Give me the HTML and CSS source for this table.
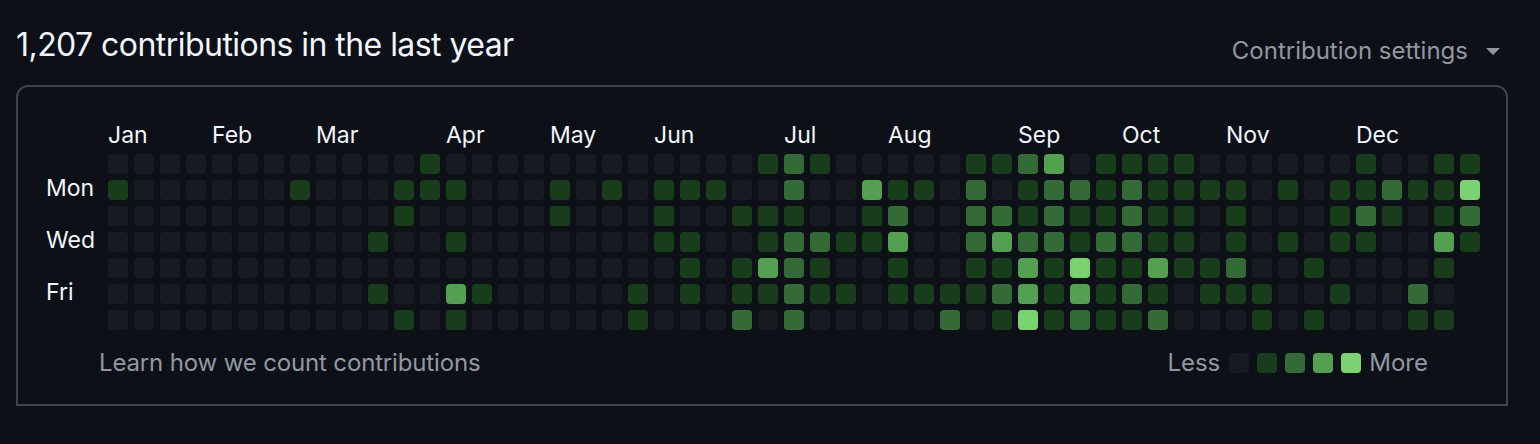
FILE: index.html
```html
<!DOCTYPE html>
<html lang="en">
<head>
<meta charset="utf-8">
<title>Contributions</title>
<link rel="stylesheet" href="styles.css">
</head>
<body>
<div class="page">
  <div class="head">
    <h2 class="title">1,207 contributions in the last year</h2>
    <button class="settings" type="button">Contribution settings
      <svg class="caret" width="14" height="7" viewBox="0 0 14 7" aria-hidden="true"><polygon points="0,0 14,0 7,7"/></svg>
    </button>
  </div>
  <div class="box">
    <div class="cal">
      <div class="months">
        <span class="m-jan">Jan</span><span class="m-feb">Feb</span><span class="m-mar">Mar</span><span class="m-apr">Apr</span><span class="m-may">May</span><span class="m-jun">Jun</span><span class="m-jul">Jul</span><span class="m-aug">Aug</span><span class="m-sep">Sep</span><span class="m-oct">Oct</span><span class="m-nov">Nov</span><span class="m-dec">Dec</span>
      </div>
      <div class="days">
        <span></span><span>Mon</span><span></span><span>Wed</span><span></span><span>Fri</span><span></span>
      </div>
      <div class="cells">
        <!-- Sun -->
        <i></i><i></i><i></i><i></i><i></i><i></i><i></i><i></i><i></i><i></i><i></i><i></i><i class="a"></i>
        <i></i><i></i><i></i><i></i><i></i><i></i><i></i><i></i><i></i><i></i><i></i><i></i><i class="a"></i>
        <i class="b"></i><i class="a"></i><i></i><i></i><i></i><i></i><i></i><i class="a"></i><i class="a"></i><i class="b"></i><i class="c"></i><i></i><i class="a"></i>
        <i class="a"></i><i class="a"></i><i class="a"></i><i></i><i></i><i></i><i></i><i></i><i></i><i class="a"></i><i></i><i></i><i class="a"></i><i class="a"></i>
        <!-- Mon -->
        <i class="a"></i><i></i><i></i><i></i><i></i><i></i><i></i><i class="a"></i><i></i><i></i><i></i><i class="a"></i><i class="a"></i>
        <i class="a"></i><i></i><i></i><i></i><i class="a"></i><i></i><i class="a"></i><i></i><i class="a"></i><i class="a"></i><i class="a"></i><i></i><i></i>
        <i class="b"></i><i></i><i></i><i class="c"></i><i class="a"></i><i class="a"></i><i></i><i class="b"></i><i></i><i class="a"></i><i class="b"></i><i class="b"></i><i class="a"></i>
        <i class="b"></i><i class="a"></i><i class="a"></i><i class="a"></i><i class="a"></i><i></i><i class="a"></i><i></i><i class="a"></i><i class="a"></i><i class="b"></i><i class="a"></i><i class="a"></i><i class="d"></i>
        <!-- Tue -->
        <i></i><i></i><i></i><i></i><i></i><i></i><i></i><i></i><i></i><i></i><i></i><i class="a"></i><i></i>
        <i></i><i></i><i></i><i></i><i class="a"></i><i></i><i></i><i></i><i class="a"></i><i></i><i></i><i class="a"></i><i class="a"></i>
        <i class="a"></i><i></i><i></i><i class="a"></i><i class="b"></i><i></i><i></i><i class="b"></i><i class="b"></i><i class="a"></i><i class="b"></i><i class="a"></i><i class="a"></i>
        <i class="b"></i><i class="a"></i><i class="a"></i><i></i><i class="a"></i><i></i><i></i><i></i><i class="a"></i><i class="b"></i><i class="a"></i><i></i><i class="a"></i><i class="b"></i>
        <!-- Wed -->
        <i></i><i></i><i></i><i></i><i></i><i></i><i></i><i></i><i></i><i></i><i class="a"></i><i></i><i></i>
        <i class="a"></i><i></i><i></i><i></i><i></i><i></i><i></i><i></i><i class="a"></i><i class="a"></i><i></i><i></i><i class="a"></i>
        <i class="b"></i><i class="b"></i><i class="a"></i><i class="a"></i><i class="c"></i><i></i><i></i><i class="b"></i><i class="c"></i><i class="b"></i><i class="b"></i><i class="a"></i><i class="b"></i>
        <i class="b"></i><i class="a"></i><i class="a"></i><i></i><i class="a"></i><i></i><i class="a"></i><i></i><i class="a"></i><i class="a"></i><i></i><i></i><i class="c"></i><i class="a"></i>
        <!-- Thu -->
        <i></i><i></i><i></i><i></i><i></i><i></i><i></i><i></i><i></i><i></i><i></i><i></i><i></i>
        <i></i><i></i><i></i><i></i><i></i><i></i><i></i><i></i><i></i><i class="a"></i><i></i><i class="a"></i><i class="c"></i>
        <i class="b"></i><i class="a"></i><i></i><i></i><i class="a"></i><i></i><i></i><i class="a"></i><i class="a"></i><i class="c"></i><i class="a"></i><i class="d"></i><i class="a"></i>
        <i class="a"></i><i class="c"></i><i class="a"></i><i class="a"></i><i class="b"></i><i></i><i></i><i class="a"></i><i></i><i></i><i></i><i></i><i class="a"></i><i class="x"></i>
        <!-- Fri -->
        <i></i><i></i><i></i><i></i><i></i><i></i><i></i><i></i><i></i><i></i><i class="a"></i><i></i><i></i>
        <i class="c"></i><i class="a"></i><i></i><i></i><i></i><i></i><i></i><i class="a"></i><i></i><i class="a"></i><i></i><i class="a"></i><i class="a"></i>
        <i class="b"></i><i class="a"></i><i class="a"></i><i></i><i class="a"></i><i class="a"></i><i class="a"></i><i class="a"></i><i class="b"></i><i class="c"></i><i class="a"></i><i class="c"></i><i class="a"></i>
        <i class="b"></i><i class="a"></i><i></i><i class="a"></i><i class="a"></i><i class="a"></i><i></i><i></i><i class="a"></i><i></i><i></i><i class="b"></i><i></i><i class="x"></i>
        <!-- Sat -->
        <i></i><i></i><i></i><i></i><i></i><i></i><i></i><i></i><i></i><i></i><i></i><i class="a"></i><i></i>
        <i class="a"></i><i></i><i></i><i></i><i></i><i></i><i></i><i class="a"></i><i></i><i></i><i></i><i class="b"></i><i></i>
        <i class="b"></i><i></i><i></i><i></i><i></i><i></i><i class="b"></i><i></i><i class="a"></i><i class="d"></i><i class="a"></i><i class="b"></i><i class="a"></i>
        <i class="a"></i><i class="b"></i><i></i><i></i><i></i><i class="a"></i><i></i><i class="a"></i><i></i><i></i><i></i><i class="a"></i><i class="a"></i><i class="x"></i>
      </div>
    </div>
    <div class="foot">
      <a class="learn" href="#">Learn how we count contributions</a>
      <div class="legend">
        <span>Less</span>
        <i></i><i class="a"></i><i class="b"></i><i class="c"></i><i class="d"></i>
        <span>More</span>
      </div>
    </div>
  </div>
</div>
</body>
</html>
```

FILE: styles.css
```css
* { box-sizing: border-box; }

body {
  margin: 0;
  background: #0d1117;
  color: #f0f6fc;
  font-family: Inter, "Noto Sans", "Liberation Sans", sans-serif;
}

.page {
  width: 1492px;
  margin-left: 16px;
  padding-top: 25px;
}

.head {
  display: flex;
  justify-content: space-between;
  align-items: flex-start;
  height: 40px;
  margin-bottom: 20px;
}

.title {
  margin: 0;
  font-size: 32px;
  font-weight: 400;
  line-height: 40px;
  letter-spacing: -0.55px;
  color: #f0f6fc;
}

.settings {
  display: flex;
  align-items: center;
  gap: 18px;
  margin-top: 11px;
  padding: 0 8px 0 0;
  border: 0;
  background: none;
  font-family: inherit;
  font-size: 24px;
  line-height: 30px;
  color: #9198a1;
}

.caret { fill: #9198a1; }

.box {
  border: 2px solid #3d444d;
  border-radius: 12px 12px 0 0;
  padding: 33px 0 26px 28px;
}

.cal {
  display: grid;
  grid-template-columns: 62px auto;
}

.months {
  grid-column: 2;
  grid-row: 1;
  display: grid;
  grid-template-columns: repeat(53, 20px);
  column-gap: 6px;
  height: 30px;
  margin-bottom: 4px;
  font-size: 23px;
  line-height: 30px;
}

.months span { grid-row: 1; white-space: nowrap; }
.m-jan { grid-column: 1; }
.m-feb { grid-column: 5; }
.m-mar { grid-column: 9; }
.m-apr { grid-column: 14; }
.m-may { grid-column: 18; }
.m-jun { grid-column: 22; }
.m-jul { grid-column: 27; }
.m-aug { grid-column: 31; }
.m-sep { grid-column: 36; }
.m-oct { grid-column: 40; }
.m-nov { grid-column: 44; }
.m-dec { grid-column: 49; }

.days {
  grid-column: 1;
  grid-row: 2;
  display: grid;
  grid-template-rows: repeat(7, 20px);
  row-gap: 6px;
  margin-top: -2px;
  font-size: 23px;
  line-height: 20px;
}

.cells {
  grid-column: 2;
  grid-row: 2;
  display: grid;
  grid-template-columns: repeat(53, 20px);
  grid-auto-rows: 20px;
  gap: 6px;
}

.cells i, .legend i {
  display: block;
  width: 20px;
  height: 20px;
  border-radius: 4px;
  background: #161b22;
}

.cells i.a, .legend i.a { background: #183d1b; }
.cells i.b, .legend i.b { background: #336b36; }
.cells i.c, .legend i.c { background: #52a050; }
.cells i.d, .legend i.d { background: #7bd270; }
.cells i.x { visibility: hidden; }

.foot {
  display: flex;
  justify-content: space-between;
  align-items: center;
  margin: 18px 78px 0 53px;
  font-size: 24px;
  line-height: 30px;
  color: #9198a1;
}

.learn {
  color: #9198a1;
  text-decoration: none;
  letter-spacing: -0.15px;
}

.legend {
  display: flex;
  align-items: center;
  gap: 8px;
}

.legend span:first-child { margin-right: 1px; }
```
